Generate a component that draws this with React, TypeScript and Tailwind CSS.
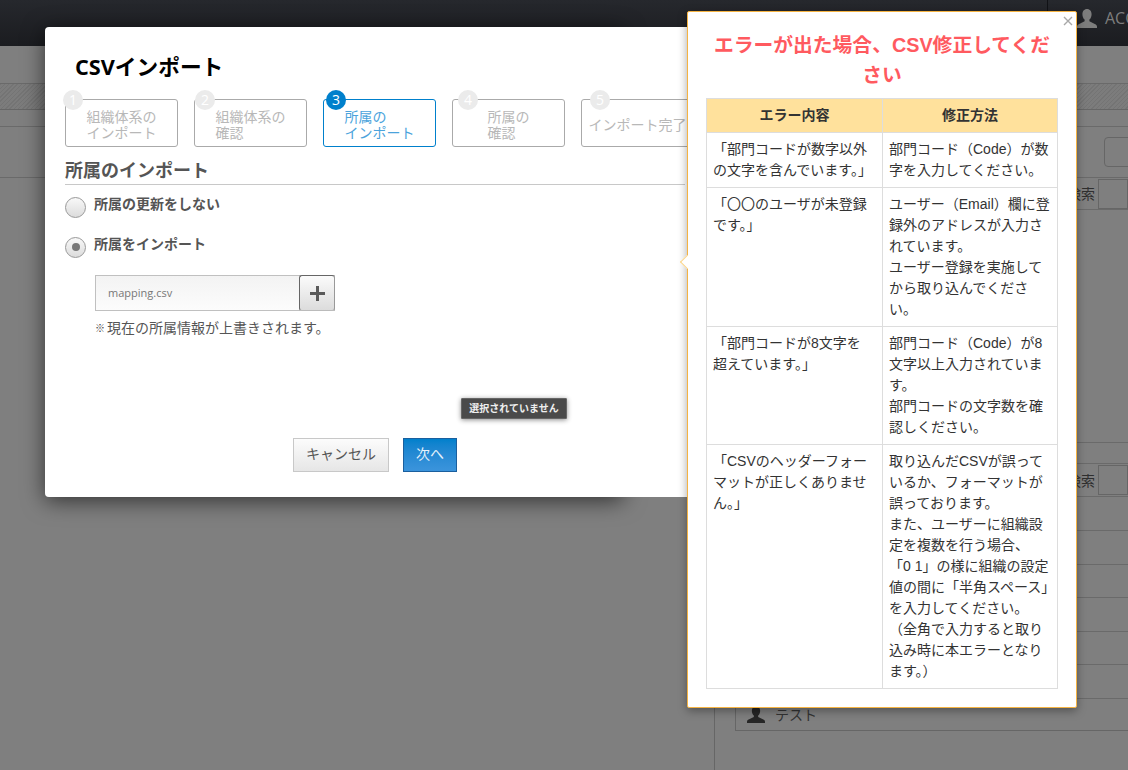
import React from "react";

const ja = "font-['Open_Sans','Noto_Sans_CJK_JP',sans-serif]";
const L = "\uFF08";
const R = "\uFF09";

const stepBadge: Record<number, string> = {
  1: "left-[-3px]",
  2: "left-[0px]",
  3: "left-[2px]",
  4: "left-[5px]",
  5: "left-[8px]",
};

function Step({ n, lines, active }: { n: number; lines: string[]; active?: boolean }) {
  return (
    <div
      className={`relative w-[113px] h-[48px] shrink-0 rounded-[3px] border flex items-center justify-center ${
        active ? "border-[#0080cc] text-[#4ba3dc]" : "border-[#aaaaaa] text-[#b8b8b8]"
      }`}
    >
      <span
        className={`absolute ${stepBadge[n]} top-[-10px] w-[20px] h-[20px] rounded-full flex items-center justify-center text-[14px] leading-none text-white ${
          active ? "bg-[#0080cc]" : "bg-[#ebebeb]"
        }`}
      >
        {n}
      </span>
      <div className="pt-[4px] text-[14px] leading-[16px] whitespace-nowrap text-left">
        {lines.map((l) => (
          <div key={l}>{l}</div>
        ))}
      </div>
    </div>
  );
}

function Radio({ label, checked }: { label: string; checked?: boolean }) {
  return (
    <div className="flex items-center h-[22px]">
      <span className="w-[21px] h-[21px] rounded-full border border-[#999] bg-gradient-to-b from-[#f8f8f8] to-[#dcdcdc] flex items-center justify-center shrink-0">
        {checked && <span className="w-[8px] h-[8px] rounded-full bg-[#777]" />}
      </span>
      <span className="ml-[8px] mt-[-7px] text-[14px] font-bold text-[#555]">{label}</span>
    </div>
  );
}

const rows: [React.ReactNode, React.ReactNode][] = [
  [
    <>「部門コードが数字以外<br />の文字を含んでいます。」</>,
    <>部門コード{L}Code{R}が数<br />字を入力してください。</>,
  ],
  [
    <>「〇〇のユーザが未登録<br />です。」</>,
    <>ユーザー{L}Email{R}欄に登<br />録外のアドレスが入力さ<br />れています。<br />ユーザー登録を実施して<br />から取り込んでくださ<br />い。</>,
  ],
  [
    <>「部門コードが8文字を<br />超えています。」</>,
    <>部門コード{L}Code{R}が8<br />文字以上入力されていま<br />す。<br />部門コードの文字数を確<br />認しください。</>,
  ],
  [
    <>「CSVのヘッダーフォー<br />マットが正しくありませ<br />ん。」</>,
    <>取り込んだCSVが誤って<br />いるか、フォーマットが<br />誤っております。<br />また、ユーザーに組織設<br />定を複数を行う場合、<br />「0 1」の様に組織の設定<br />値の間に「半角スペース」<br />を入力してください。<br />{L}全角で入力すると取り<br />込み時に本エラーとなり<br />ます。{R}</>,
  ],
];

function BgRow({ h }: { h: string }) {
  return <div className={`${h} border-b border-[#6a6a6a] shrink-0`} />;
}

export default function App() {
  return (
    <div className={`relative w-[1128px] h-[770px] overflow-hidden bg-[#7f7f7f] ${ja}`}>
      {/* dimmed page behind the dialogs */}
      <div className="flex flex-col h-full">
        <div className="h-[46px] shrink-0 bg-gradient-to-b from-[#26282d] to-[#1b1c20] flex justify-end">
          <div className="w-[81px] border-l border-[#111216] flex items-center pl-[29px] gap-[8px] text-[#7d7d7d]">
            <svg width="20" height="22" viewBox="0 0 20 22" className="shrink-0 mt-[-8px]">
              <path
                fill="#7d7d7d"
                d="M10 1c-3 0-4.600 2.400-4.600 5.200 0 2.200.8 4.300 2.200 5.400v1.600L1.200 16.400C.4 16.900 0 17.700 0 18.600V20h20v-1.400c0-.9-.4-1.700-1.200-2.200l-6.400-3.200v-1.600c1.400-1.100 2.200-3.200 2.200-5.400C14.600 3.400 13 1 10 1z"
              />
            </svg>
            <span className="text-[16px] mt-[-10px] whitespace-nowrap">ACC</span>
          </div>
        </div>
        <BgRow h="h-[38px]" />
        <div className="h-[26px] shrink-0 border-b border-[#666] bg-[repeating-linear-gradient(135deg,#747474_0,#747474_1px,#7c7c7c_1px,#7c7c7c_3px)]" />
        <BgRow h="h-[17px]" />
        <div className="h-[51px] shrink-0 border-b border-[#6a6a6a] flex justify-end items-center">
          <div className="w-[40px] h-[30px] mr-[-16px] rounded-[4px] border border-[#666]" />
        </div>
        <div className="flex flex-1 min-h-0">
          <div className="w-[715px] shrink-0 border-r border-[#666]" />
          <div className="flex-1 flex flex-col">
            <div className="h-[32px] shrink-0 border-b border-[#6a6a6a] flex justify-end items-center text-[14px] text-[#2f2f2f]">
              <span className="mr-[3px]">検索</span>
              <div className="w-[30px] h-[30px] border border-[#666]" />
            </div>
            <div className="h-[233px] shrink-0 border-b border-[#6a6a6a]" />
            <BgRow h="h-[21px]" />
            <div className="h-[33px] shrink-0 border-b border-[#6a6a6a] flex justify-end items-center text-[14px] text-[#2f2f2f]">
              <span className="mr-[3px]">検索</span>
              <div className="w-[30px] h-[30px] border border-[#666]" />
            </div>
            <div className="ml-[20px] flex flex-col">
              <BgRow h="h-[34px]" />
              <BgRow h="h-[34px]" />
              <BgRow h="h-[33px]" />
              <BgRow h="h-[34px]" />
              <BgRow h="h-[33px]" />
              <BgRow h="h-[34px]" />
              <div className="h-[32px] border-l border-b border-[#666] flex items-center pl-[11px] gap-[10px] text-[14px] text-[#333]">
                <svg width="18" height="18" viewBox="0 0 20 20" className="shrink-0">
                  <path
                    fill="#262626"
                    d="M10 0C7 0 5.400 2.400 5.400 5.200c0 2.200.8 4.300 2.200 5.400v1.600L1.200 15.400C.4 15.900 0 16.700 0 17.600V19h20v-1.400c0-.9-.4-1.700-1.200-2.200l-6.400-3.200v-1.600c1.400-1.100 2.200-3.200 2.200-5.400C14.600 2.400 13 0 10 0z"
                  />
                </svg>
                <span>テスト</span>
              </div>
            </div>
          </div>
        </div>
      </div>

      {/* import dialog shadow (narrower than the dialog itself) */}
      <div className="absolute left-[45px] top-[27px] w-[578px] h-[470px] rounded-[4px] shadow-[0_4px_22px_rgba(0,0,0,0.6)]" />

      {/* import dialog */}
      <div className="absolute left-[45px] top-[27px] w-[660px] h-[470px] rounded-[4px] bg-white pl-[20px] pt-[24px]">
        <h1 className="ml-[10px] h-[32px] leading-[31px] text-[21.7px] font-bold text-black">CSVインポート</h1>
        <div className="mt-[16px] flex gap-[16px]">
          <Step n={1} lines={["組織体系の", "インポート"]} />
          <Step n={2} lines={["組織体系の", "確認"]} />
          <Step n={3} lines={["所属の", "インポート"]} active />
          <Step n={4} lines={["所属の", "確認"]} />
          <Step n={5} lines={["インポート完了"]} />
        </div>
        <h2 className="mt-[10px] w-[620px] h-[28px] pt-[1px] leading-[24px] border-b border-[#c8c8c8] text-[18px] font-bold text-[#555]">
          所属のインポート
        </h2>
        <div className="mt-[11px] flex flex-col gap-[18px]">
          <Radio label="所属の更新をしない" />
          <Radio label="所属をインポート" checked />
        </div>
        <div className="mt-[17px] ml-[30px] w-[240px] h-[36px] flex border border-[#c0c0c0] bg-gradient-to-b from-[#f3f3f3] to-[#fcfcfc]">
          <div className="flex-1 pl-[12px] flex items-center text-[11px] text-[#777]">mapping.csv</div>
          <div className="w-[36px] my-[-1px] mr-[-1px] rounded-[3px] border border-[#666] border-r-[#999] border-b-[#bbb] bg-gradient-to-b from-[#fbfbfb] to-[#dcdcdc] flex items-center justify-center">
            <svg width="15" height="15" viewBox="0 0 15 15">
              <path d="M6 0h3v6h6v3H9v6H6V9H0V6h6z" fill="#5a5a5a" />
            </svg>
          </div>
        </div>
        <p className="mt-[7px] ml-[30px] h-[20px] leading-[20px] text-[#555] whitespace-nowrap flex items-center">
          <span className="text-[10px] font-bold w-[12px] font-['Noto_Sans_CJK_JP',sans-serif] text-[#444]">※</span>
          <span className="text-[14px]">現在の所属情報が上書きされます。</span>
        </p>
        <div className="mt-[100px] ml-[228px] flex gap-[14px]">
          <button className="w-[96px] h-[34px] pb-[3px] border border-[#c8c8c8] bg-gradient-to-b from-[#fcfcfc] to-[#e6e6e6] text-[14px] text-[#555]">
            キャンセル
          </button>
          <div className="relative">
            <button className="w-[54px] h-[34px] pb-[3px] border border-[#1a5f9e] bg-gradient-to-b from-[#0080cc] to-[#3b94dc] text-[14px] text-[#e6f2fb]">
              次へ
            </button>
            <span className="absolute left-[58px] top-[-40px] w-[106px] h-[21px] rounded-[1px] border border-[#666] bg-[#4a4a4a] shadow-[0_1px_5px_rgba(0,0,0,0.45)] flex items-center justify-center text-[10px] font-bold text-[#eeeeee] whitespace-nowrap">
              選択されていません
            </span>
          </div>
        </div>
      </div>

      {/* help popover */}
      <div className="absolute left-[687px] top-[11px] w-[390px] h-[697px] rounded-[2px] border border-[#f5b342] bg-white p-[18px] shadow-[0_3px_10px_rgba(0,0,0,0.35)] font-['Liberation_Sans','Noto_Sans_CJK_JP',sans-serif]">
        <span className="absolute left-[-6px] top-[245px] w-[10px] h-[10px] rotate-45 bg-white border-l border-b border-[#fbd58a]" />
        <svg width="10" height="10" viewBox="0 0 10 10" className="absolute right-[3px] top-[4px]">
          <path d="M1 1l8 8M9 1l-8 8" stroke="#a8a8a8" strokeWidth="1.4" />
        </svg>
        <h3 className="relative text-center text-[19.8px] leading-[30px] font-bold text-[#ff5a5f] mb-[8px]">
          エラーが出た場合、CSV修正してください
        </h3>
        <table className="relative w-[352px] border-collapse table-fixed text-[14px] leading-[21px] text-[#333]">
          <thead>
            <tr className="bg-[#ffe19c]">
              <th className="w-[176px] border border-[#dddddd] px-[6px] py-[6px] text-center font-bold">エラー内容</th>
              <th className="border border-[#dddddd] px-[6px] py-[6px] text-center font-bold">修正方法</th>
            </tr>
          </thead>
          <tbody>
            {rows.map(([a, b], i) => (
              <tr key={i}>
                <td className="align-top border border-[#dddddd] px-[6px] py-[6px] whitespace-nowrap">{a}</td>
                <td className="align-top border border-[#dddddd] px-[6px] py-[6px] whitespace-nowrap">{b}</td>
              </tr>
            ))}
          </tbody>
        </table>
      </div>
    </div>
  );
}
